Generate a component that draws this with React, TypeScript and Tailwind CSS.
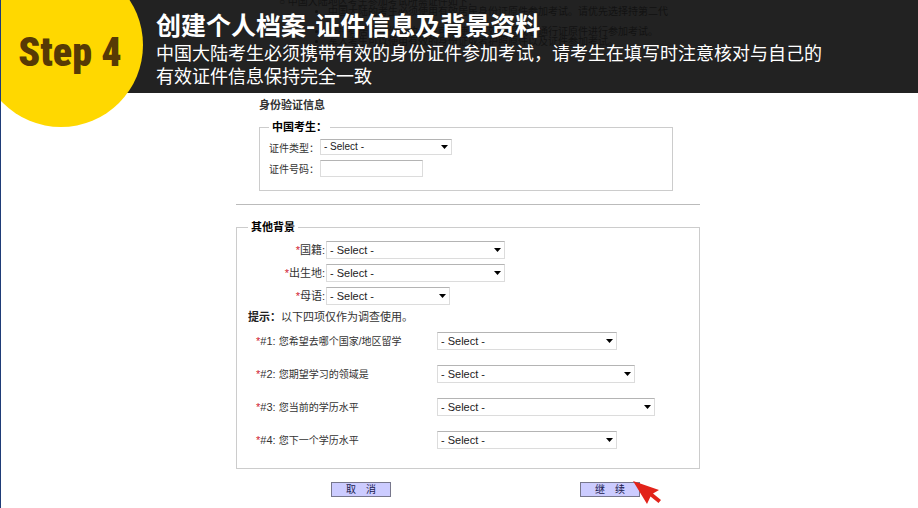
import type { ReactNode } from "react";

const selectText = "- Select -";

type PickerProps = { id: string; className: string };

function Picker({ id, className }: PickerProps) {
  return (
    <div className={`relative shrink-0 ${className}`}>
      <select
        id={id}
        className="block h-full w-full appearance-none border border-[#dcdcdc] border-t-[#b4b4b4] bg-white pl-[3px] leading-none text-[#222] outline-none"
      >
        <option>{selectText}</option>
      </select>
      <svg
        className="pointer-events-none absolute top-1/2 right-1 -mt-[2px] h-1 w-[7px]"
        viewBox="0 0 7 4"
        aria-hidden="true"
      >
        <path d="M0 0h7L3.5 4z" fill="#000" />
      </svg>
    </div>
  );
}

function Star() {
  return <span className="text-[#d02030]">*</span>;
}

function Legend({ children }: { children: ReactNode }) {
  return (
    <legend className="px-[3px] text-[11px] leading-[14px] font-bold text-black">
      {children}
    </legend>
  );
}

const backgroundFields = [
  { id: "nationality", label: "国籍:", width: "h-[18px] w-[179px] text-[11px]" },
  { id: "birthplace", label: "出生地:", width: "h-[18px] w-[179px] text-[11px]" },
  { id: "language", label: "母语:", width: "h-[18px] w-[124px] text-[11px]" },
];

const questions = [
  { id: "q1", no: "#1:", label: "您希望去哪个国家/地区留学", width: "h-[18px] w-[180px] text-[11px]" },
  { id: "q2", no: "#2:", label: "您期望学习的领域是", width: "h-[18px] w-[198px] text-[11px]" },
  { id: "q3", no: "#3:", label: "您当前的学历水平", width: "h-[18px] w-[218px] text-[11px]" },
  { id: "q4", no: "#4:", label: "您下一个学历水平", width: "h-[18px] w-[180px] text-[11px]" },
];

const buttonClass =
  "h-[15px] w-[60px] border border-[#77778c] bg-[#ccccff] text-[10px] leading-none whitespace-pre text-[#202050]";

export default function App() {
  return (
    <div className="min-h-screen overflow-hidden border-l border-[#1f3c78] bg-white font-['Liberation_Sans','Noto_Sans_CJK_SC',sans-serif] text-[#333]">
      <header className="relative -ml-px h-[93px] bg-[#222]">
        {/* Page text dimmed under the banner */}
        <div className="absolute inset-x-0 top-0 h-full overflow-hidden text-[10px] leading-[10px] whitespace-nowrap text-[#121212]">
          <div className="mx-auto max-w-[370px]">
            <p className="-mt-[3px] pl-[5px]">○ 中国大陆地区考生参加考试所需证件如下：</p>
            <ul className="list-disc pl-[54px]">
              <li>中国大陆的考生必须使用有效居民身份证原件参加考试。请优先选择持第二代</li>
              <li className="mt-[10px]">未持有居民身份证的考生可以使用有效护照或者通行证原件进行参加考试。</li>
              <li>军人考生可以使用有效的身份证或者护照原件以及证件参加考试。</li>
            </ul>
          </div>
        </div>
        <div className="absolute -top-[37px] -left-[21px] flex size-[164px] items-center justify-center rounded-full bg-[#ffd800]">
          <span className="pt-4 pl-[18px] font-['Impact','Roboto_Condensed','Roboto',sans-serif] text-[40px] leading-none font-black whitespace-nowrap text-[#573a05]">
            Step 4
          </span>
        </div>
        <div className="relative ml-[156px] pt-[7px] font-['Noto_Sans_CJK_SC',sans-serif] text-white">
          <h1 className="text-[25px] leading-[34px] font-bold">创建个人档案-证件信息及背景资料</h1>
          <p className="text-[18px] leading-[23px]">
            中国大陆考生必须携带有效的身份证件参加考试，请考生在填写时注意核对与自己的
            <br />
            有效证件信息保持完全一致
          </p>
        </div>
      </header>

      <main className="pt-[5px] pl-[17px]">
        <form className="mx-auto max-w-[464px]" onSubmit={(e) => e.preventDefault()}>
          <div className="mr-[27px] ml-[23px]">
            <h2 className="text-[11px] leading-[14px] font-bold text-[#333]">身份验证信息</h2>
            <fieldset className="mt-2 border border-[#ccc] px-[9px] pb-[13px]">
              <Legend>中国考生：</Legend>
              <div className="flex flex-col gap-[3px] pt-1 text-[10px]">
                <div className="flex items-center">
                  <label htmlFor="idType" className="w-[51px] pt-1 leading-[14px]">证件类型：</label>
                  <Picker id="idType" className="h-4 w-[132px]" />
                </div>
                <div className="flex items-center">
                  <label htmlFor="idNumber" className="w-[51px] pt-1 leading-[14px]">证件号码：</label>
                  <input
                    id="idNumber"
                    type="text"
                    className="h-[17px] w-[103px] border border-[#dcdcdc] border-t-[#b4b4b4] px-1 outline-none"
                  />
                </div>
              </div>
            </fieldset>
          </div>

          <hr className="mt-[13px] border-t border-[#bbb]" />

          <fieldset className="mt-[15px] border border-[#ccc] px-[11px] pb-[19px]">
            <Legend>其他背景</Legend>
            <div className="flex flex-col gap-[5px] pt-[7px]">
              {backgroundFields.map((f) => (
                <div key={f.id} className="flex h-[18px] items-center">
                  <label htmlFor={f.id} className="w-[78px] pr-px text-right text-[11px] leading-[18px]">
                    <Star />
                    {f.label}
                  </label>
                  <Picker id={f.id} className={f.width} />
                </div>
              ))}
            </div>
            <p className="mt-[5px] text-[11px] leading-[14px]">
              <b className="text-[#222]">提示：</b>以下四项仅作为调查使用。
            </p>
            <div className="mt-2 flex flex-col gap-[15px] pl-2">
              {questions.map((q) => (
                <div key={q.id} className="flex h-[18px] items-center">
                  <label htmlFor={q.id} className="w-[181px] text-[11px] leading-[18px]">
                    <Star />
                    {q.no} <span className="text-[10px]">{q.label}</span>
                  </label>
                  <Picker id={q.id} className={q.width} />
                </div>
              ))}
            </div>
          </fieldset>

          <div className="mt-[13px] flex gap-[189px] pl-[95px]">
            <button type="button" className={buttonClass}>取　消</button>
            <div className="relative">
              <button type="submit" className={`block ${buttonClass}`}>继　续</button>
              <svg
                className="absolute -top-px left-[53px] h-6 w-7"
                viewBox="0 0 28 24"
                aria-hidden="true"
              >
                <path d="M0 0L26 9L20 12.5L28 19L25.500 22L17.500 15.500L14 23Z" fill="#e2231a" />
              </svg>
            </div>
          </div>
        </form>
      </main>
    </div>
  );
}
